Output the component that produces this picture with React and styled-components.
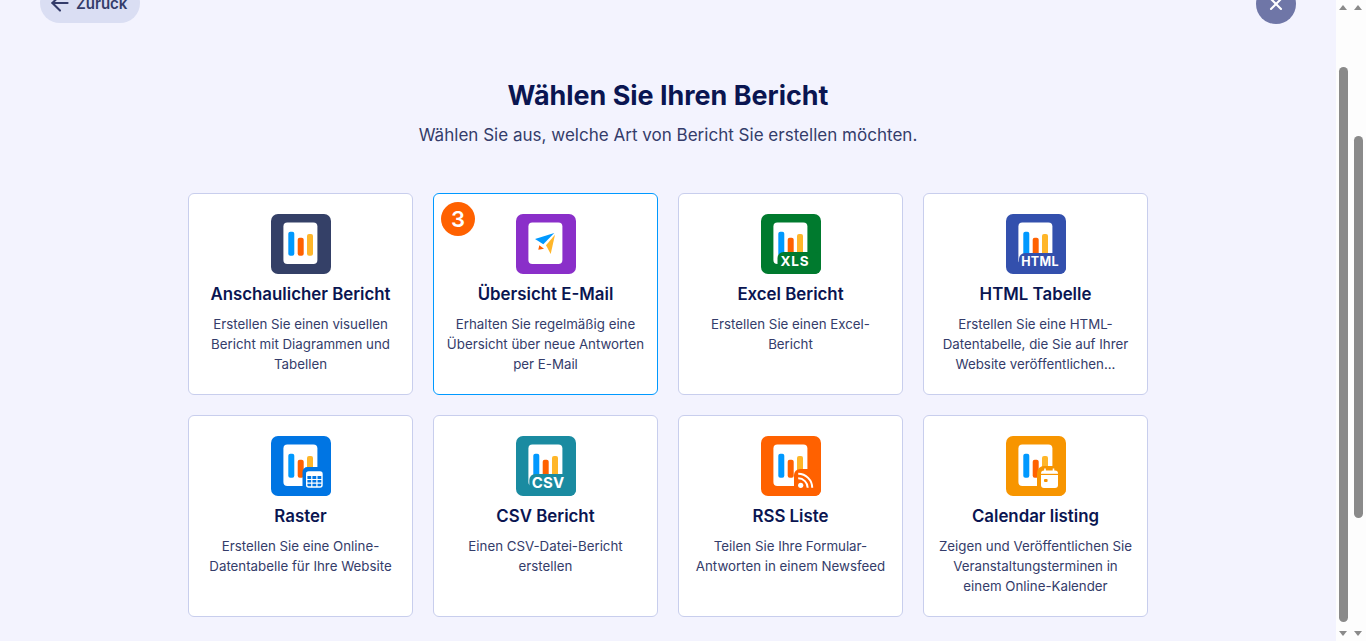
import React from 'react'
import styled, { createGlobalStyle } from 'styled-components'
import { ArrowLeft, X } from 'lucide-react'

const GlobalStyle = createGlobalStyle`
  html, body {
    margin: 0;
    height: 100%;
    overflow: hidden;
    font-family: Inter, "Liberation Sans", sans-serif;
  }
  * { box-sizing: border-box; }
`

const Page = styled.div`
  display: flex;
  width: 1366px;
  height: 641px;
  overflow: hidden;
  background: #f3f3fe;
`

const Main = styled.main`
  flex: 1;
  min-width: 0;
  height: 641px;
  overflow: hidden;
`

const TopBar = styled.header`
  display: flex;
  justify-content: space-between;
  align-items: flex-start;
  margin-top: -17px;
  padding: 0 40px;
`

const BackButton = styled.button`
  display: flex;
  align-items: center;
  gap: 3px;
  width: 100px;
  height: 40px;
  padding: 0 0 0 7px;
  border: none;
  border-radius: 20px;
  background: #dadef3;
  color: #343c6a;
  font-family: inherit;
  font-size: 15px;
  font-weight: 600;
`

const CloseButton = styled.button`
  display: flex;
  align-items: center;
  justify-content: center;
  width: 40px;
  height: 40px;
  margin-top: 1px;
  padding: 0;
  border: none;
  border-radius: 50%;
  background: #6f76a7;
  color: #fff;
`

const Heading = styled.div`
  margin-top: 53px;
  text-align: center;
`

const Title = styled.h1`
  margin: 0;
  color: #0a1551;
  font-size: 26.9px;
  font-weight: 700;
  line-height: 36px;
`

const Subtitle = styled.p`
  margin: 10px 0 0;
  color: #343c6a;
  font-size: 17.05px;
  line-height: 24px;
`

const Grid = styled.div`
  display: grid;
  grid-template-columns: repeat(4, 225px);
  grid-auto-rows: 202px;
  gap: 20px;
  justify-content: center;
  margin-top: 46px;
`

const Card = styled.button`
  position: relative;
  display: flex;
  flex-direction: column;
  align-items: center;
  padding: 20px 10px 0;
  border: 1px solid ${(p) => (p.$active ? '#0099ff' : '#c8ceed')};
  border-radius: 6px;
  background: #fff;
  font-family: inherit;
  text-align: center;
`

const Badge = styled.span`
  position: absolute;
  top: 8px;
  left: 7px;
  display: flex;
  align-items: center;
  justify-content: center;
  width: 34px;
  height: 34px;
  border-radius: 50%;
  background: #ff6100;
  color: #fff;
  font-size: 22px;
  font-weight: 600;
`

const IconWrap = styled.div`
  width: 60px;
  height: 60px;
  flex: none;
`

const CardTitle = styled.h2`
  margin: 8px 0 0;
  color: #0a1551;
  font-size: 16.85px;
  font-weight: 600;
  line-height: 24px;
  white-space: nowrap;
`

const CardText = styled.p`
  margin: 8px 0 0;
  color: #343c6a;
  font-size: 13.3px;
  line-height: 20px;
`

const Rail = styled.div`
  position: relative;
  flex: none;
  width: 15px;
  height: 641px;
  background: #fdfdfd;
`

const Thumb = styled.div`
  position: absolute;
  left: 3px;
  top: ${(p) => p.$top}px;
  width: 9px;
  height: ${(p) => p.$height}px;
  border-radius: 5px;
  background: #8a8a8a;
`

const Arrow = styled.div`
  position: absolute;
  left: 3px;
  ${(p) => (p.$down ? 'bottom: 5px;' : 'top: 5px;')}
  width: 0;
  height: 0;
  border-left: 4.5px solid transparent;
  border-right: 4.5px solid transparent;
  ${(p) => (p.$down ? 'border-top: 5px solid #8a8a8a;' : 'border-bottom: 5px solid #8a8a8a;')}
`

const Bars = () => (
  <>
    <rect x="17.3" y="17.7" width="6" height="24" rx="2" fill="#0099ff" />
    <rect x="26.7" y="23.7" width="6" height="18" rx="2" fill="#ff6100" />
    <rect x="36" y="20" width="6" height="21.7" rx="2" fill="#ffb629" />
  </>
)

const LabelIcon = ({ bg, label, size, pillX, pillY, textX, spacing }) => (
  <svg width="60" height="60" viewBox="0 0 60 60">
    <rect width="60" height="60" rx="7" fill={bg} />
    <rect x="12.4" y="8.4" width="34" height="41.6" rx="4" fill="#fff" />
    <Bars />
    <rect x={pillX} y={pillY} width={60 - pillX} height={60 - pillY} rx="6" fill={bg} />
    <text
      x={textX}
      y="52"
      fill="#fff"
      fontFamily="Inter, sans-serif"
      fontSize={size}
      fontWeight="700"
      letterSpacing={spacing}
      textAnchor="middle"
    >
      {label}
    </text>
  </svg>
)

const DocIcon = ({ bg, children }) => (
  <svg width="60" height="60" viewBox="0 0 60 60">
    <rect width="60" height="60" rx="7" fill={bg} />
    <rect x="12.4" y="8.4" width="34" height="41.6" rx="4" fill="#fff" />
    <Bars />
    {children}
  </svg>
)

const icons = {
  visual: <DocIcon bg="#344067" />,
  mail: (
    <svg width="60" height="60" viewBox="0 0 60 60">
      <rect width="60" height="60" rx="7" fill="#8a2fc9" />
      <rect x="12.4" y="8.4" width="34" height="41.6" rx="4" fill="#fff" />
      <path d="M19 25 L38.3 19 L27.3 30.3 Z" fill="#0099ff" />
      <path d="M39 20.7 L34.7 40 L30 31.3 Z" fill="#ffb629" />
      <path d="M23.3 31.3 L28 34.7 L22.3 35.7 Z" fill="#ff6100" />
    </svg>
  ),
  excel: <LabelIcon bg="#007a2e" label="XLS" size="13.5" pillX="16.5" pillY="38" textX="34" spacing="0.8" />,
  html: <LabelIcon bg="#3350ad" label="HTML" size="12.5" pillX="13" pillY="39" textX="34" spacing="0.3" />,
  grid: (
    <DocIcon bg="#0075e3">
      <rect x="31.5" y="31" width="28.5" height="29" rx="5" fill="#0075e3" />
      <rect x="35.7" y="36" width="15.3" height="15" rx="2" fill="none" stroke="#fff" strokeWidth="1.4" />
      <rect x="35.7" y="36" width="15.3" height="4" fill="#fff" />
      <path d="M35.7 43.5H51M35.7 47.2H51M40.8 40V51M45.9 40V51" stroke="#fff" strokeWidth="1.2" />
    </DocIcon>
  ),
  csv: <LabelIcon bg="#1a8ba1" label="CSV" size="15" pillX="13.3" pillY="38" textX="32" spacing="0.2" />,
  rss: (
    <DocIcon bg="#ff6100">
      <rect x="33" y="33" width="27" height="27" rx="6" fill="#ff6100" />
      <circle cx="39.7" cy="49.3" r="2.6" fill="#fff" />
      <path d="M37.2 42.3a9.5 9.5 0 0 1 9.5 9.5" fill="none" stroke="#fff" strokeWidth="2" />
      <path d="M37.2 37.8a14 14 0 0 1 14 14" fill="none" stroke="#fff" strokeWidth="2" />
    </DocIcon>
  ),
  calendar: (
    <DocIcon bg="#f79500">
      <rect x="31" y="30" width="29" height="30" rx="7" fill="#f79500" />
      <rect x="35" y="34.5" width="17" height="17.5" rx="3" fill="#fff" />
      <path d="M39 32.5V37M47.5 32.5V37" stroke="#fff" strokeWidth="1.6" />
      <path d="M35 38.4H52" stroke="#f79500" strokeWidth="1.2" />
      <rect x="38" y="43" width="3.6" height="3" rx="1" fill="#f79500" />
    </DocIcon>
  ),
}

const reports = [
  {
    icon: 'visual',
    title: 'Anschaulicher Bericht',
    text: 'Erstellen Sie einen visuellen Bericht mit Diagrammen und Tabellen',
  },
  {
    icon: 'mail',
    title: 'Übersicht E-Mail',
    text: 'Erhalten Sie regelmäßig eine Übersicht über neue Antworten per E-Mail',
    badge: 3,
  },
  { icon: 'excel', title: 'Excel Bericht', text: 'Erstellen Sie einen Excel-Bericht' },
  {
    icon: 'html',
    title: 'HTML Tabelle',
    text: 'Erstellen Sie eine HTML-Datentabelle, die Sie auf Ihrer Website veröffentlichen...',
  },
  { icon: 'grid', title: 'Raster', text: 'Erstellen Sie eine Online-Datentabelle für Ihre Website' },
  { icon: 'csv', title: 'CSV Bericht', text: 'Einen CSV-Datei-Bericht erstellen' },
  { icon: 'rss', title: 'RSS Liste', text: 'Teilen Sie Ihre Formular-Antworten in einem Newsfeed' },
  {
    icon: 'calendar',
    title: 'Calendar listing',
    text: 'Zeigen und Veröffentlichen Sie Veranstaltungsterminen in einem Online-Kalender',
  },
]

export default function App() {
  return (
    <Page>
      <GlobalStyle />
      <Main>
        <TopBar>
          <BackButton>
            <ArrowLeft size={26} strokeWidth={1.9} />
            Zurück
          </BackButton>
          <CloseButton>
            <X size={20} strokeWidth={2.5} />
          </CloseButton>
        </TopBar>
        <Heading>
          <Title>Wählen Sie Ihren Bericht</Title>
          <Subtitle>Wählen Sie aus, welche Art von Bericht Sie erstellen möchten.</Subtitle>
        </Heading>
        <Grid>
          {reports.map((r) => (
            <Card key={r.title} $active={!!r.badge}>
              {r.badge && <Badge>{r.badge}</Badge>}
              <IconWrap>{icons[r.icon]}</IconWrap>
              <CardTitle>{r.title}</CardTitle>
              <CardText>{r.text}</CardText>
            </Card>
          ))}
        </Grid>
      </Main>
      <Rail>
        <Arrow />
        <Thumb $top={67} $height={555} />
        <Arrow $down />
      </Rail>
      <Rail>
        <Arrow />
        <Thumb $top={136} $height={382} />
        <Arrow $down />
      </Rail>
    </Page>
  )
}
